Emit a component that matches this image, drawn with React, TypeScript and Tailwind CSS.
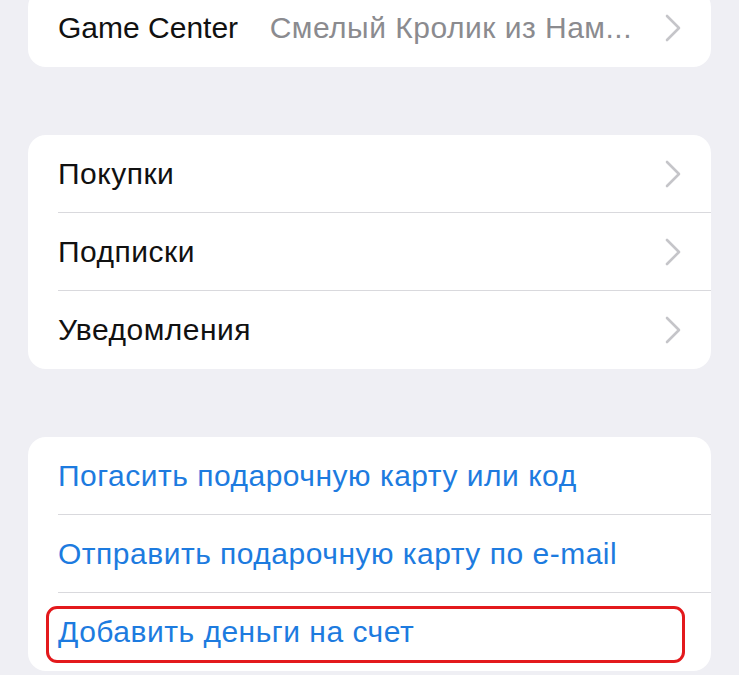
import React from "react";

const Chevron = () => (
  <svg width="16" height="28" viewBox="0 0 16 28" fill="none" className="shrink-0">
    <path d="M2 2 L14 14 L2 26" stroke="#c5c5c9" strokeWidth="2.6" strokeLinecap="round" strokeLinejoin="round" />
  </svg>
);

type RowProps = {
  label: string;
  value?: string;
  chevron?: boolean;
  blue?: boolean;
  divider?: boolean;
  latin?: boolean;
};

const Row = ({ label, value, chevron, blue, divider, latin }: RowProps) => (
  <div className="pl-[30px]">
    <div
      className={
        "flex h-[78px] items-center pr-[30px] " +
        (divider ? "border-b border-[#d9d9dd]" : "")
      }
    >
      <span
        className={
          "whitespace-nowrap " +
          (latin ? "tracking-normal " : "tracking-[0.5px] ") +
          (blue ? "text-[#1d7bdf]" : "text-[#111]")
        }
      >
        {label}
      </span>
      <div className="flex-1" />
      {value && (
        <span className="mr-[33px] whitespace-nowrap tracking-[0.5px] text-[#8b8b8f]">{value}</span>
      )}
      {chevron && <Chevron />}
    </div>
  </div>
);

export default function App() {
  return (
    <div
      className="min-h-[675px] w-[739px] overflow-hidden bg-[#efeff4] text-[30px] leading-none"
      style={{ fontFamily: '"Liberation Sans", Arial, sans-serif' }}
    >
      <div className="mx-[28px] mt-[-11px] flex flex-col gap-[68px]">
        <section className="overflow-hidden rounded-[18px] bg-white">
          <Row label="Game Center" value="Смелый Кролик из Нам..." chevron latin />
        </section>

        <section className="overflow-hidden rounded-[18px] bg-white">
          <Row label="Покупки" chevron divider />
          <Row label="Подписки" chevron divider />
          <Row label="Уведомления" chevron />
        </section>

        <section className="relative rounded-[18px] bg-white">
          <Row label="Погасить подарочную карту или код" blue divider />
          <Row label="Отправить подарочную карту по e-mail" blue divider />
          <Row label="Добавить деньги на счет" blue />
          <div className="pointer-events-none absolute left-[18px] top-[169px] h-[57px] w-[639px] rounded-[11px] border-[3px] border-[#e3191c]" />
        </section>
      </div>
    </div>
  );
}
